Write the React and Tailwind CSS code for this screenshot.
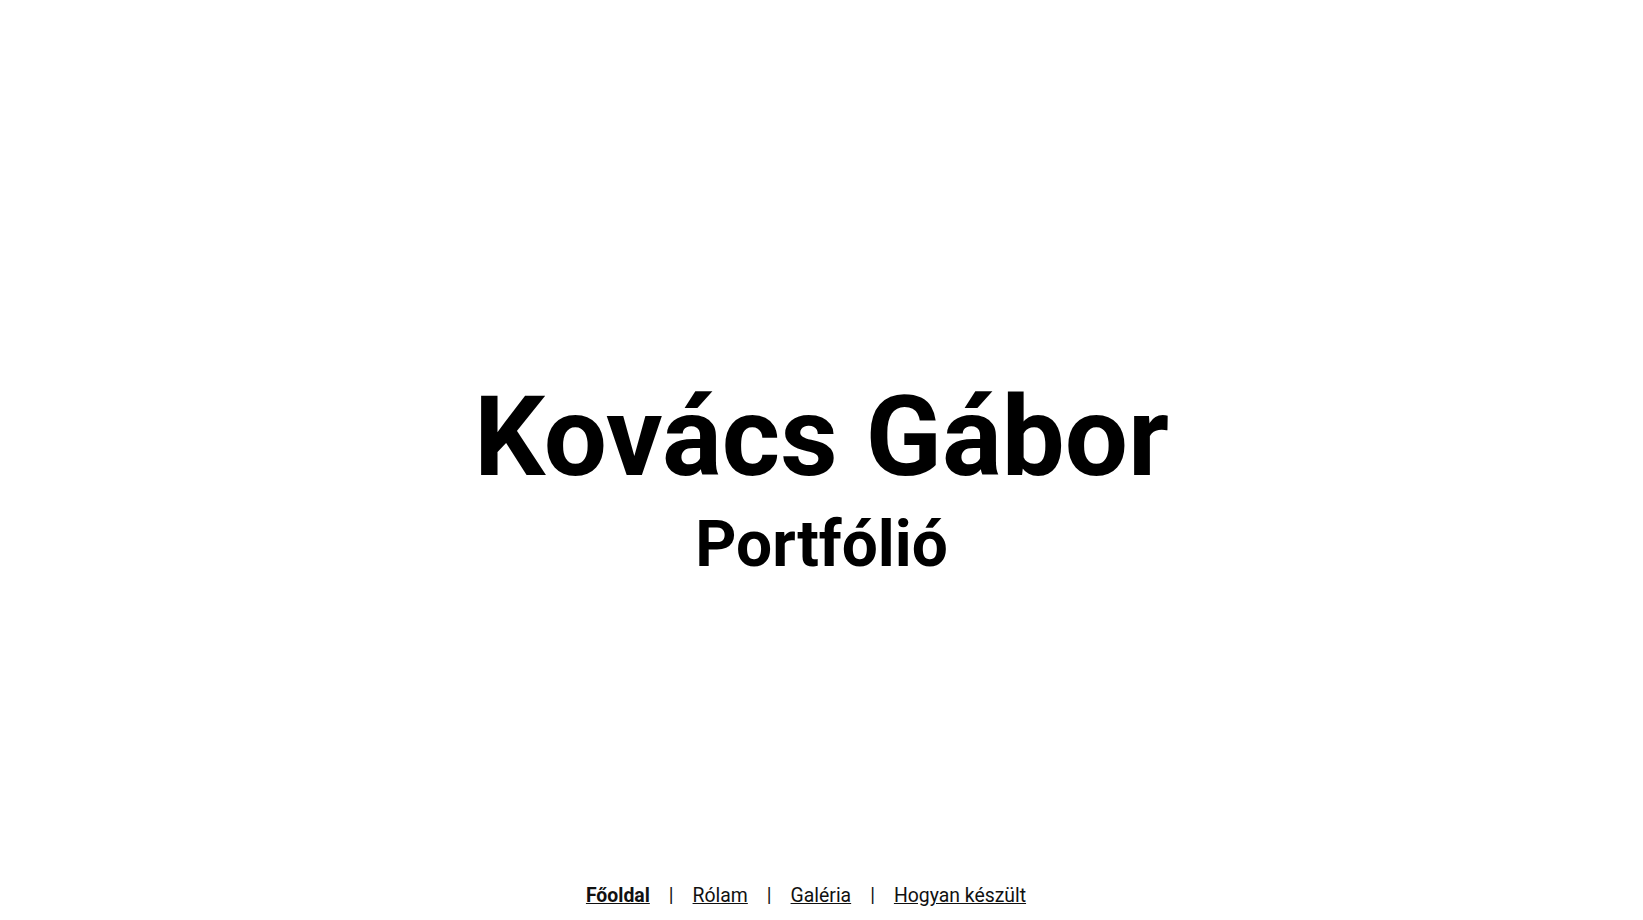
export default function App() {
  const links = ['Főoldal', 'Rólam', 'Galéria', 'Hogyan készült']

  return (
    <div className="h-screen flex flex-col bg-white text-black" style={{ fontFamily: 'Roboto, sans-serif' }}>
      <main className="flex-1 flex flex-col items-center justify-center pt-[76px]">
        <h1 className="text-[112px] font-bold leading-none">Kovács Gábor</h1>
        <h2 className="text-[64px] font-bold leading-none mt-5">Portfólió</h2>
      </main>
      <nav className="flex justify-center items-center pb-[10px] pr-[31px] text-[19.4px] leading-7 text-[#111]">
        {links.map((l, i) => (
          <span key={l} className="flex items-center">
            {i > 0 && <span className="mx-[19px]">|</span>}
            <a href="#" className={`underline ${i === 0 ? 'font-bold' : ''}`}>{l}</a>
          </span>
        ))}
      </nav>
    </div>
  )
}
